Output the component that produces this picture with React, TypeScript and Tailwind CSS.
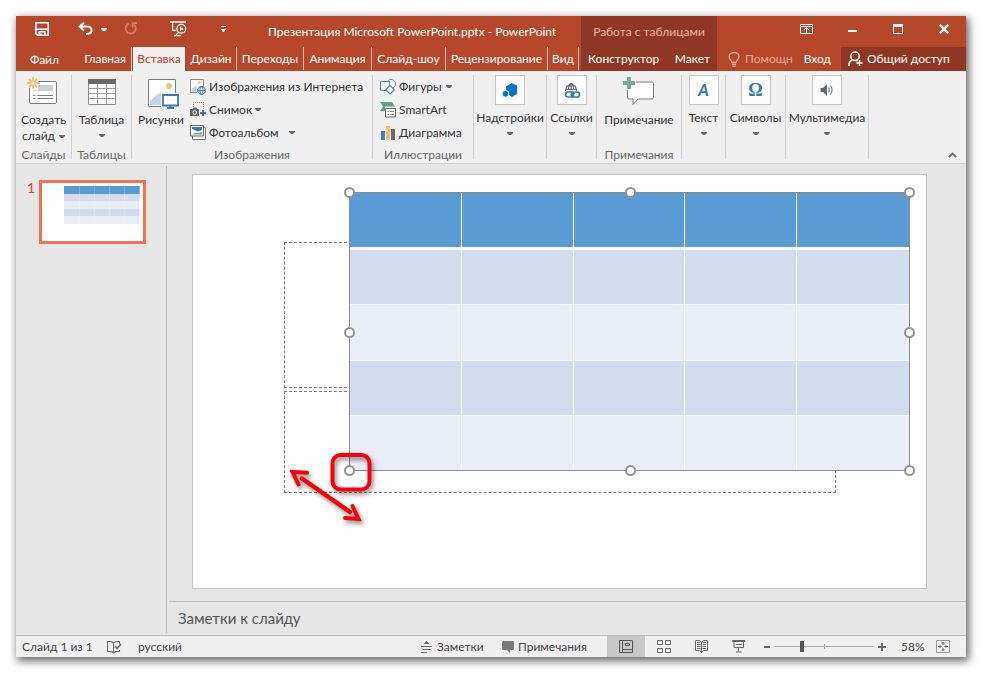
import React from 'react';
import type { ReactNode } from 'react';

const tabs = [
  { name: 'Дизайн', width: 'w-[51px]' },
  { name: 'Переходы', width: 'w-[67px]' },
  { name: 'Анимация', width: 'w-[68px]' },
  { name: 'Слайд-шоу', width: 'w-[74px]' },
  { name: 'Рецензирование', width: 'w-[102px]' },
  { name: 'Вид', width: 'w-[31px]' },
];

const Caret = ({ className = 'text-[#666]' }: { className?: string }) => (
  <svg width="6" height="3" viewBox="0 0 6 3" className={`shrink-0 ${className}`} aria-hidden="true">
    <path d="M0 0h6v1L4 3H2L0 1z" fill="currentColor" />
  </svg>
);

function Group({ label, width, children }: { label?: string; width: string; children: ReactNode }) {
  return (
    <div className={`${width} flex shrink-0 flex-col border-r border-[#d0d0d0]`}>
      <div className="flex-1">{children}</div>
      <div className="h-3 text-center leading-4 whitespace-nowrap text-[#666]">{label}</div>
    </div>
  );
}

function BoxButton({ label, children }: { label: string; children: ReactNode }) {
  return (
    <button className="flex w-full flex-col items-center whitespace-nowrap">
      <span className="flex size-[30px] items-center justify-center border border-[#c6c6c6] bg-[#fcfcfc]">{children}</span>
      <span className="mt-[5px] leading-4">{label}</span>
      <Caret className="mt-[6px] text-[#666]" />
    </button>
  );
}

function SmallButton({ label, caret, children }: { label: string; caret?: string; children: ReactNode }) {
  return (
    <button className="flex h-[23px] items-center whitespace-nowrap">
      <span className="w-[19px]">{children}</span>
      <span>{label}</span>
      {caret && <span className={caret}><Caret /></span>}
    </button>
  );
}

/* Quick access icons */

const SaveIcon = () => (
  <svg width="14" height="14" viewBox="0 0 14 14" fill="none" stroke="#fff" strokeWidth="1.6">
    <path d="M.8.8h12.4v12.4H2.6L.8 11.6zM1 7.3h12" />
    <path d="M4.3 13V9.8h5.5V13M6 11.5v2" />
  </svg>
);

const UndoIcon = () => (
  <svg width="15" height="13" viewBox="0 0 15 13" fill="none" stroke="#fff" strokeWidth="2">
    <path d="M6 .7 1.6 4.6 6 8.5M2 4.6h7.2c6 0 6 7.4-1.2 7.4" />
  </svg>
);

const RedoIcon = () => (
  <svg width="14" height="13" viewBox="0 0 14 13" fill="none" stroke="#d87c65" strokeWidth="1.8">
    <path d="M5 1.6a5.1 5.1 0 1 0 5.2 1.1" />
    <path d="M13 1.2H8.6v4.2" />
  </svg>
);

const ShowIcon = () => (
  <svg width="17" height="16" viewBox="0 0 17 16" fill="none" stroke="#fff" strokeWidth="1.3">
    <path d="M0 1h16M2.6 1v8.4H6M4 14.600h2l2-3M7 14.600h4" />
    <circle cx="11.3" cy="7.8" r="4.4" />
    <path d="M10 5.600v4.500l3.500-2.200z" fill="#fff" stroke="none" />
  </svg>
);

/* Ribbon icons */

const NewSlideIcon = () => (
  <svg width="30" height="28" viewBox="0 0 30 28" fill="none">
    <rect x="2.5" y="4.5" width="27" height="22" rx="1.5" fill="#fff" stroke="#7a7a7a" />
    <path d="M11 8h15v6H6v-1h5z" fill="#d0d0d0" />
    <path d="M10.5 18.5H26M10.5 21.5H26M6 18.5h2.5M6 21.5h2.5" stroke="#7a7a7a" />
    <circle cx="6" cy="6" r="6" fill="#f0f0f0" />
    <path d="M6 0v12M0 6h12M1.8 1.8l8.4 8.4M10.2 1.8l-8.4 8.4" stroke="#ecc179" strokeWidth="1.8" />
    <circle cx="6" cy="6" r="2" fill="#fff" stroke="#ecc179" />
  </svg>
);

const TableIcon = () => (
  <svg width="28" height="26" viewBox="0 0 28 26" fill="none">
    <path d="M.5 1h27v24.5H.5z" fill="#fff" stroke="#8a8a8a" />
    <path d="M0 0h28v5H0z" fill="#6a6a6a" />
    <path d="M1 9.5h26M1 14.5h26M1 19.500h26M9.500 5v20M18.500 5v20" stroke="#9a9a9a" />
  </svg>
);

const PicturesIcon = () => (
  <svg width="31" height="30" viewBox="0 0 31 30" fill="none">
    <path d="M.5.5h27v27H.5z" fill="#fff" stroke="#7a7a7a" />
    <circle cx="21" cy="7" r="3" fill="#ecc179" />
    <path d="M2 26v-4l9-8 4 3v9z" fill="#c3d2e8" />
    <path d="M13 14h18v16H13z" fill="#f0f0f0" />
    <path d="M15 16h15v10.5H15z" fill="#fff" stroke="#3f77b1" strokeWidth="1.8" />
    <path d="M19 29h7M22.5 27v2" stroke="#3f77b1" strokeWidth="1.8" />
  </svg>
);

const WebPictureIcon = () => (
  <svg width="16" height="16" viewBox="0 0 16 16" fill="none">
    <path d="M.5.5h13v13H.5z" fill="#fff" stroke="#8a8a8a" />
    <circle cx="9.5" cy="3.5" r="1.5" fill="#ecc179" />
    <path d="M1.5 13v-3l4-3 3 3v3z" fill="#c3d2e8" />
    <circle cx="11.5" cy="11.5" r="5" fill="#f0f0f0" />
    <circle cx="11.5" cy="11.5" r="3.8" fill="#fff" stroke="#3f77b1" strokeWidth="1.2" />
    <ellipse cx="11.5" cy="11.5" rx="1.6" ry="3.8" stroke="#3f77b1" />
    <path d="M8 11.500h7" stroke="#3f77b1" />
  </svg>
);

const ScreenshotIcon = () => (
  <svg width="16" height="15" viewBox="0 0 16 15" fill="none">
    <path d="M3.5 5V.5h10V9" stroke="#8a8a8a" strokeDasharray="1 1" />
    <path d="M0 7h2.5l1-1.5h3L7.5 7H9v7H0z" fill="#666" />
    <circle cx="4.7" cy="10.5" r="1.8" stroke="#fff" />
    <path d="M13 8v6M10 11h6" stroke="#3f77b1" strokeWidth="2" />
  </svg>
);

const AlbumIcon = () => (
  <svg width="16" height="15" viewBox="0 0 16 15" fill="none">
    <path d="M2.500 2.500h13v12h-13z" fill="#fff" stroke="#777" />
    <path d="M.5.5h13v10.500H.5z" fill="#fff" stroke="#666" />
    <path d="M2 2h10v3L8 6.500 2 4z" fill="#3f77b1" />
    <path d="M2 9.500c3-3 7 0 10-3v3z" fill="#6da58f" />
  </svg>
);

const ShapesIcon = () => (
  <svg width="16" height="16" viewBox="0 0 16 16" fill="#fff" stroke="#4a86c0">
    <circle cx="11" cy="5" r="4.5" />
    <path d="M.5 2.5h9v9h-9z" />
    <path d="m10 6.5 4.5 4.2-4.5 4.3-4.5-4.3z" strokeWidth="1.2" />
  </svg>
);

const SmartArtIcon = () => (
  <svg width="16" height="16" viewBox="0 0 16 16" fill="none">
    <path d="M0 0h12l3 4.5H5V9H0l3-4.5z" fill="#5fa389" />
    <path d="M5.5 6.5h10v8.5h-10z" fill="#fff" stroke="#666" />
    <path d="M7.5 9.5H9M10 9.5h4M7.5 12.5H9M10 12.5h4" stroke="#888" />
  </svg>
);

const ChartIcon = () => (
  <svg width="16" height="14" viewBox="0 0 16 14">
    <path d="M1 5h4v9H1z" fill="#4a7fb5" />
    <path d="M6 0h4v14H6z" fill="#e9bf7b" />
    <path d="M11 3h4v11h-4z" fill="#6a6a6a" />
  </svg>
);

const AddinIcon = () => (
  <svg width="16" height="16" viewBox="0 0 16 16" fill="#0a72c8">
    <path d="M4 4.500 9.500 1 15 3.500V12l-5 3-3-2V9.500L4 8.500z" />
    <circle cx="3.5" cy="11.800" r="3.300" stroke="#fcfcfc" strokeWidth=".8" />
  </svg>
);

const LinksIcon = () => (
  <svg width="18" height="18" viewBox="0 0 18 18" fill="none">
    <g stroke="#6a6a6a" strokeWidth="1.1">
      <path d="M2.500 10a5.500 6.500 0 1 1 11 0M2 8.500h12M3.200 5h9.600M8 2v7M5.500 9c0-9 5-9 5 0" />
    </g>
    <g stroke="#3f77b1" strokeWidth="1.7">
      <rect x="2.500" y="11" width="8" height="5" rx="2.500" fill="#fcfcfc" />
      <rect x="8.500" y="11" width="8" height="5" rx="2.500" />
      <path d="m7.500 14.500 4-2.500" />
    </g>
  </svg>
);

const CommentIcon = () => (
  <svg width="32" height="29" viewBox="0 0 32 29" fill="none">
    <path d="M4.5 5h24.5a1.5 1.5 0 0 1 1.5 1.5v14a1.5 1.5 0 0 1-1.500 1.500H15l-5 5.500V22H6a1.5 1.5 0 0 1-1.500-1.500z" fill="#fff" stroke="#7a7a7a" />
    <path d="M0 0h13v7h-5v6H0z" fill="#f0f0f0" />
    <path d="M4.500 13v7" stroke="#7a7a7a" />
    <path d="M6 0v12M0 6h12" stroke="#78ab98" strokeWidth="4" />
  </svg>
);

const SpeakerIcon = () => (
  <svg width="14" height="12" viewBox="0 0 14 12" fill="none">
    <path d="M.5 4H3l4-4v12L3 8H.5z" fill="#666" />
    <path d="M8.5 3.5q1.700 2.500 0 5M10.500 1.500q3 4.500 0 9" stroke="#4a7fb5" strokeWidth="1.1" />
  </svg>
);

/* Status bar icons */

const SpellIcon = () => (
  <svg width="15" height="14" viewBox="0 0 15 14" fill="none" stroke="#666" strokeWidth="1.1">
    <path d="M12.5 4V1.5H9L6.500 3 4.500 1.500H.5v10h4l2 1.500 2-1.500h4V10M6.500 3v10" />
    <path d="m8 6 2 2.500 4-4.500" strokeWidth="1.6" />
  </svg>
);

const NotesIcon = () => (
  <svg width="12" height="12" viewBox="0 0 12 12" fill="none" stroke="#666">
    <path d="M0 5.500h11M1.500 8.500H9.500M0 11.500h6" />
    <path d="m5.500 0 3 3h-6z" fill="#666" stroke="none" />
  </svg>
);

const NormalViewIcon = () => (
  <svg width="14" height="13" viewBox="0 0 14 13" fill="none" stroke="#555">
    <path d="M.5.5h13v12H.5zM3.500.5v12M3.500 9.500h10M6.500 3.500h4v2h-4z" />
  </svg>
);

const SorterIcon = () => (
  <svg width="14" height="13" viewBox="0 0 14 13" fill="none" stroke="#666">
    <path d="M.5.5h5v4h-5zM8.500.5h5v4h-5zM.5 8.500h5v4h-5zM8.500 8.500h5v4h-5z" />
  </svg>
);

const ReadingIcon = () => (
  <svg width="13" height="13" viewBox="0 0 13 13" fill="none" stroke="#666">
    <path d="M6.500 2 4.500.5h-4v10h4l2 1.500 2-1.500h4V.5h-4zM6.500 2v11M2 2.500h3.500M2 4.500h3.500M2 6.500h3.500M2 8.500h3.500M7.500 2.500H11M7.500 4.500H11M7.500 6.500H11M7.500 8.500H11" />
  </svg>
);

const SlideshowIcon = () => (
  <svg width="14" height="13" viewBox="0 0 14 13" fill="none" stroke="#666">
    <path d="M.5.5h12.500v1H.5zM2 2v5.500h9.500V2M4 4.500h5.500M6.500 7.500v4M4 12h5.500" />
  </svg>
);

const FitIcon = () => (
  <svg width="14" height="13" viewBox="0 0 14 13" fill="none" stroke="#666">
    <path d="M5 .5H.5v12H5M9 .5h4.500v12H9M1 .5h12M1 12.500h12" stroke="#999" />
    <path d="M7 2V5M5.500 3h3M7 8v3M5.500 10h3M2 6.500h3.500M4 5v3M8.500 6.500H12M10 5v3" />
  </svg>
);

function TitleBar() {
  return (
    <div className="flex h-[31px]">
      <div className="flex w-[565px] shrink-0">
        <button aria-label="Сохранить" className="flex w-[52px] justify-center pt-[6px]"><SaveIcon /></button>
        <button aria-label="Отменить" className="flex w-[46px] items-start gap-2 pt-[6px] pl-[10px]">
          <UndoIcon />
          <Caret className="mt-[6px] text-white" />
        </button>
        <button aria-label="Вернуть" className="flex w-[36px] items-start pt-[6px] pl-[10px]"><RedoIcon /></button>
        <button aria-label="Показать слайды" className="flex w-[56px] items-start justify-center pt-[5px]"><ShowIcon /></button>
        <button aria-label="Настройка панели" className="flex w-[34px] justify-center pt-[10px]">
          <svg width="5" height="7" viewBox="0 0 5 7" fill="#fff"><path d="M0 0h5v1H0zM0 3h5L3 6H2z" /></svg>
        </button>
        <h1 className="ml-[28px] pt-[8px] leading-4 whitespace-nowrap text-white">Презентация Microsoft PowerPoint.pptx - PowerPoint</h1>
      </div>
      <div className="w-[136px] shrink-0 bg-[#8f3722] pt-[8px] text-center leading-4 whitespace-nowrap text-[#efb8a4]">Работа с таблицами</div>
      <div className="flex flex-1 justify-end">
        <button aria-label="Параметры ленты" className="flex w-[46px] justify-center pt-[8px]">
          <svg width="13" height="10" viewBox="0 0 13 10" fill="none" stroke="#fff"><path d="M.5.5h12v9H.5zM.5 2.500h12M6.500 9V4M4 6l2.500-2.500L9 6" /></svg>
        </button>
        <button aria-label="Свернуть" className="flex w-[46px] justify-center pt-[14px]"><span className="h-[2px] w-[9px] bg-white" /></button>
        <button aria-label="Развернуть" className="flex w-[46px] justify-center pt-[8px]"><span className="h-[10px] w-[10px] border border-t-[3px] border-white" /></button>
        <button aria-label="Закрыть" className="flex w-[45px] justify-center pt-[8px]">
          <svg width="10" height="10" viewBox="0 0 10 10" stroke="#fff" strokeWidth="2.2"><path d="m.8.8 8.400 8.400M9.200.8.8 9.200" /></svg>
        </button>
      </div>
    </div>
  );
}

function TabBar() {
  return (
    <nav className="flex h-6 whitespace-nowrap text-white">
      <button className="w-[57px] shrink-0 pt-px">Файл</button>
      <button className="w-[59px] shrink-0 border-r border-[#e6c0b6] pr-[5px] text-right">Главная</button>
      <button className="mx-px w-[52px] shrink-0 bg-[#f0f0f0] text-[#c8401f]">Вставка</button>
      {tabs.map(t => (
        <div key={t.name} className={`${t.width} shrink-0 pb-px`}>
          <button className="h-full w-full border-r border-[#e6c0b6]">{t.name}</button>
        </div>
      ))}
      <div className="ml-[2px] flex w-[136px] shrink-0 justify-between bg-[#8f3722] px-[7px]">
        <button>Конструктор</button>
        <button>Макет</button>
      </div>
      <button className="flex w-[75px] shrink-0 items-center gap-[5px] pl-[11px] text-[#eaa893]">
        <svg width="12" height="15" viewBox="0 0 12 15" fill="none" stroke="currentColor" strokeWidth="1.300" className="shrink-0">
          <path d="M4 10.500C4 8 1 7.500 1 4.800 1 2.200 3.200.6 6 .6s5 1.600 5 4.200C11 7.500 8 8 8 10.500zM4 12.500h4M4.500 14.500h3" />
        </svg>
        Помощн
      </button>
      <button className="ml-auto px-[10px]">Вход</button>
      <button className="flex w-[125px] shrink-0 items-center gap-1 bg-[#8f3722] pl-[7px]">
        <svg width="15" height="16" viewBox="0 0 15 16" fill="none" stroke="#fff" strokeWidth="1.5">
          <circle cx="7" cy="5.2" r="4.2" />
          <path d="M.8 15c0-3 1.700-5.300 4-6.200M8.500 9.300l1.300.9M11.500 9v6M8.500 12h6" />
        </svg>
        Общий доступ
      </button>
    </nav>
  );
}

function Ribbon() {
  return (
    <div className="flex h-[93px] shrink-0 border-b border-[#d0d0d0] bg-[#f0f0f0] py-1 text-[#333]">
      <Group label="Слайды" width="w-[56px]">
        <button className="flex w-full flex-col items-center pt-[2px] whitespace-nowrap">
          <span className="pr-1"><NewSlideIcon /></span>
          <span className="mt-[7px] leading-4">Создать</span>
          <span className="flex items-center gap-1 leading-4">слайд <Caret /></span>
        </button>
      </Group>
      <Group label="Таблицы" width="w-[60px]">
        <button className="flex w-full flex-col items-center pt-[4px]">
          <TableIcon />
          <span className="mt-[7px] leading-4">Таблица</span>
          <Caret className="mt-[6px] text-[#666]" />
        </button>
      </Group>
      <Group label="Изображения" width="w-[241px]">
        <div className="flex">
          <button className="flex w-[58px] flex-col items-center pt-1">
            <span className="pl-1"><PicturesIcon /></span>
            <span className="mt-[3px] leading-4">Рисунки</span>
          </button>
          <div className="flex flex-col">
            <SmallButton label="Изображения из Интернета"><WebPictureIcon /></SmallButton>
            <SmallButton label="Снимок" caret="ml-[3px]"><ScreenshotIcon /></SmallButton>
            <SmallButton label="Фотоальбом" caret="ml-[10px]"><AlbumIcon /></SmallButton>
          </div>
        </div>
      </Group>
      <Group label="Иллюстрации" width="w-[101px]">
        <div className="flex flex-col pl-[7px]">
          <SmallButton label="Фигуры" caret="ml-[4px]"><ShapesIcon /></SmallButton>
          <SmallButton label="SmartArt"><SmartArtIcon /></SmallButton>
          <SmallButton label="Диаграмма"><ChartIcon /></SmallButton>
        </div>
      </Group>
      <Group width="w-[73px]"><BoxButton label="Надстройки"><AddinIcon /></BoxButton></Group>
      <Group width="w-[50px]"><BoxButton label="Ссылки"><LinksIcon /></BoxButton></Group>
      <Group label="Примечания" width="w-[85px]">
        <button className="flex w-full flex-col items-center pt-[2px]">
          <CommentIcon />
          <span className="mt-[6px] leading-4">Примечание</span>
        </button>
      </Group>
      <Group width="w-[44px]">
        <BoxButton label="Текст"><span className="text-[16px] font-black text-[#3f77b1] italic">A</span></BoxButton>
      </Group>
      <Group width="w-[60px]">
        <BoxButton label="Символы"><span className="font-['Liberation_Serif',serif] text-[18px] font-bold text-[#3f77b1]">Ω</span></BoxButton>
      </Group>
      <Group width="w-[83px]"><BoxButton label="Мультимедиа"><SpeakerIcon /></BoxButton></Group>
      <button aria-label="Свернуть ленту" className="mt-auto mr-[9px] mb-px ml-auto">
        <svg width="9" height="6" viewBox="0 0 9 6" fill="none" stroke="#666" strokeWidth="1.8"><path d="m.8 5.200 3.700-3.700 3.700 3.700" /></svg>
      </button>
    </div>
  );
}

const rowColors = ['bg-[#d2dcee]', 'bg-[#e9edf6]', 'bg-[#d2dcee]', 'bg-[#e9edf6]'];
const handles = [
  '-top-[5px] -left-[5px]', '-top-[5px] left-1/2 -ml-[5px]', '-top-[5px] -right-[5px]',
  'top-1/2 -left-[5px] -mt-[5px]', 'top-1/2 -right-[5px] -mt-[5px]',
  '-bottom-[5px] -left-[5px]', '-bottom-[5px] left-1/2 -ml-[5px]', '-bottom-[5px] -right-[5px]',
];

function SlideTable() {
  return (
    <div className="absolute top-[17px] left-[156px] h-[279px] w-[561px]">
      <div className="h-full border border-[#8a8a8a] bg-white">
        <table className="h-full w-full table-fixed border-separate border-spacing-0">
          <thead>
            <tr className="h-[56px] bg-[#5b9bd5]">
              {[0, 1, 2, 3, 4].map(c => <th key={c} className="border-r border-b-2 border-white p-0 last:border-r-0" />)}
            </tr>
          </thead>
          <tbody>
            {rowColors.map((color, i) => (
              <tr key={i} className={`h-[55px] ${color}`}>
                {[0, 1, 2, 3, 4].map(c => <td key={c} className="border-t border-r border-[#f7f9fc] p-0 last:border-r-0" />)}
              </tr>
            ))}
          </tbody>
        </table>
      </div>
      {handles.map(pos => (
        <span key={pos} className={`absolute size-[11px] rounded-full border-2 border-[#929292] bg-white ${pos}`} />
      ))}
    </div>
  );
}

function Slide() {
  return (
    <div className="relative flex-1 border border-[#c3c3c3] bg-white">
      <div className="absolute top-[67px] left-[91px] h-[146px] w-[552px] border border-dashed border-[#777]" />
      <div className="absolute top-[216px] left-[91px] h-[102px] w-[552px] border border-dashed border-[#777]" />
      <SlideTable />
      <svg width="100" height="86" viewBox="0 0 100 86" fill="none" stroke="#fb0007" className="absolute top-[270px] left-[91px] overflow-visible drop-shadow-[2px_3px_2px_rgba(0,0,0,0.45)]">
        <rect x="48.5" y="10" width="37" height="34.5" rx="8" strokeWidth="4" />
        <path d="M18 33.500 66 67" strokeWidth="4.500" strokeLinecap="round" />
        <path d="m14.500 39.500-6-12.500 14.500.8M61 73l13.500 1-6-13" strokeWidth="4" strokeLinecap="round" />
      </svg>
    </div>
  );
}

function Thumbnail() {
  return (
    <div className="flex pt-[14px] pl-[11px]">
      <span className="w-3 text-[14px] leading-4 text-[#d2472a]">1</span>
      <div className="h-16 w-[107px] border-[3px] border-[#f07250] bg-white pt-[3px] pl-[22px]">
        <table className="h-[38px] w-[76px] table-fixed border-collapse">
          <tbody>
            {['bg-[#5b9bd5]', ...rowColors].map((color, i) => (
              <tr key={i} className={color}>
                {[0, 1, 2, 3, 4].map(c => <td key={c} className="border-r border-white/20 p-0" />)}
              </tr>
            ))}
          </tbody>
        </table>
      </div>
    </div>
  );
}

function StatusBar() {
  return (
    <footer className="flex h-[22px] shrink-0 items-center border-t border-[#bdbdbd] bg-[#f0f0f0] whitespace-nowrap text-[#444]">
      <span className="w-[91px] pl-[6px]">Слайд 1 из 1</span>
      <button aria-label="Правописание" className="w-[31px]"><SpellIcon /></button>
      <button>русский</button>
      <div className="ml-auto flex h-full items-center">
        <button className="flex w-[81px] items-center gap-1"><NotesIcon />Заметки</button>
        <button className="flex w-[105px] items-center gap-1">
          <svg width="12" height="12" viewBox="0 0 12 12" fill="#777"><path d="M1 0h10l1 1v7l-1 1H8v3L5 9H1L0 8V1z" /></svg>
          Примечания
        </button>
        <button aria-label="Обычный" className="flex h-full w-[38px] items-center justify-center bg-[#c8c8c8]"><NormalViewIcon /></button>
        <button aria-label="Сортировщик слайдов" className="flex w-[38px] justify-center"><SorterIcon /></button>
        <button aria-label="Режим чтения" className="flex w-[37px] justify-center"><ReadingIcon /></button>
        <button aria-label="Показ слайдов" className="flex w-[38px] justify-center"><SlideshowIcon /></button>
        <button aria-label="Уменьшить" className="ml-[6px] h-[2px] w-[6px] bg-[#666]" />
        <input
          type="range"
          aria-label="Масштаб"
          min="0"
          max="100"
          defaultValue="27"
          className="mx-1 h-[11px] w-[100px] appearance-none bg-[linear-gradient(#a5a5a5,#a5a5a5),linear-gradient(#a5a5a5,#a5a5a5)] bg-[length:100%_1px,1px_5px] bg-center bg-no-repeat [&::-webkit-slider-thumb]:h-[11px] [&::-webkit-slider-thumb]:w-1 [&::-webkit-slider-thumb]:appearance-none [&::-webkit-slider-thumb]:bg-[#555]"
        />
        <button aria-label="Увеличить"><svg width="8" height="8" viewBox="0 0 8 8" stroke="#666" strokeWidth="2"><path d="M4 0v8M0 4h8" /></svg></button>
        <span className="ml-[15px] w-[35px]">58%</span>
        <button aria-label="Вписать в окно" className="mr-4"><FitIcon /></button>
      </div>
    </footer>
  );
}

export default function App() {
  return (
    <div className="h-screen bg-white p-4 font-['Lato','Noto_Sans',sans-serif] text-[12px]">
      <div className="flex h-full flex-col bg-[#e6e6e6] shadow-[2px_3px_8px_1px_rgba(0,0,0,0.6)]">
        <header className="shrink-0 bg-[#b7472a]">
          <TitleBar />
          <TabBar />
        </header>
        <Ribbon />
        <main className="flex min-h-0 flex-1">
          <aside className="my-[2px] w-[151px] shrink-0 border-r border-[#bcbcbc]">
            <Thumbnail />
          </aside>
          <section className="flex min-w-0 flex-1 flex-col">
            <div className="flex min-h-0 flex-1 pt-[10px] pr-[39px] pb-3 pl-[25px]">
              <Slide />
            </div>
            <div className="ml-[2px] h-[34px] shrink-0 border-t border-[#bdbdbd] pl-[9px] text-[15px] leading-[32px] text-[#555]">Заметки к слайду</div>
          </section>
        </main>
        <StatusBar />
      </div>
    </div>
  );
}
